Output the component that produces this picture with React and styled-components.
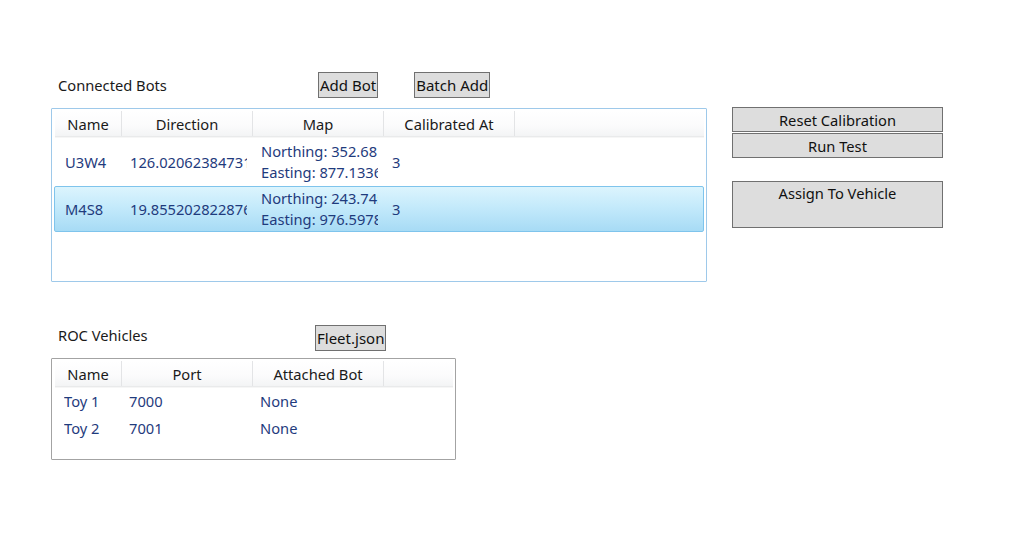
import React from 'react'
import styled, { createGlobalStyle } from 'styled-components';

const GlobalStyle = createGlobalStyle`
  html, body { margin: 0; padding: 0; background: #ffffff; }
  body { font-family: "Noto Sans", "Open Sans", sans-serif; font-size: 14.7px; color: #1a1a1a; }
`;

const bots = [
      { name: 'U3W4', direction: '126.020623847311', north: '352.6812', east: '877.13364', cal: '3' },
      { name: 'M4S8', direction: '19.8552028228761', north: '243.7451', east: '976.59784', cal: '3', selected: true },
];

const vehicles = [
      { name: 'Toy 1', port: '7000', bot: 'None' },
      { name: 'Toy 2', port: '7001', bot: 'None' },
];

const botCols = [67, 131, 131, 131];
const vehicleCols = [67, 131, 131];

export default function App() {
      return (
            <Page>
                  <GlobalStyle />
                  <TopSection>
                        <LeftColumn>
                              <TitleRow>
                                    <SectionLabel $width={267}>Connected Bots</SectionLabel>
                                    <SmallButton>Add Bot</SmallButton>
                                    <SmallButton $gap={36}>Batch Add</SmallButton>
                              </TitleRow>
                              <ListBox $width={656} $height={174} $focused>
                                    <HeaderRow>
                                          {['Name', 'Direction', 'Map', 'Calibrated At'].map((h, i) => (
                                                <HeaderCell key={h} $width={botCols[i]}>{h}</HeaderCell>
                                          ))}
                                          <HeaderFiller />
                                    </HeaderRow>
                                    {bots.map(b => (
                                          <BotRow key={b.name} $selected={b.selected}>
                                                <Cell $width={botCols[0]} $pad={10}><Clip>{b.name}</Clip></Cell>
                                                <Cell $width={botCols[1]}><Clip>{b.direction}</Clip></Cell>
                                                <Cell $width={botCols[2]}>
                                                      <MapLines>
                                                            <span>Northing: {b.north}</span>
                                                            <span>Easting: {b.east}</span>
                                                      </MapLines>
                                                </Cell>
                                                <Cell $width={botCols[3]}><Clip>{b.cal}</Clip></Cell>
                                          </BotRow>
                                    ))}
                              </ListBox>
                        </LeftColumn>
                        <ActionColumn>
                              <WideButton>Reset Calibration</WideButton>
                              <WideButton>Run Test</WideButton>
                              <TallButton>Assign To Vehicle</TallButton>
                        </ActionColumn>
                  </TopSection>

                  <BottomSection>
                        <TitleRow>
                              <SectionLabel $width={264} $lift={3}>ROC Vehicles</SectionLabel>
                              <SmallButton>Fleet.json</SmallButton>
                        </TitleRow>
                        <ListBox $width={405} $height={102}>
                              <HeaderRow>
                                    {['Name', 'Port', 'Attached Bot'].map((h, i) => (
                                          <HeaderCell key={h} $width={vehicleCols[i]}>{h}</HeaderCell>
                                    ))}
                                    <HeaderFiller $short />
                              </HeaderRow>
                              {vehicles.map(v => (
                                    <VehicleRow key={v.name}>
                                          <Cell $width={vehicleCols[0]} $pad={10}><Clip>{v.name}</Clip></Cell>
                                          <Cell $width={vehicleCols[1]}><Clip>{v.port}</Clip></Cell>
                                          <Cell $width={vehicleCols[2]}><Clip>{v.bot}</Clip></Cell>
                                    </VehicleRow>
                              ))}
                        </ListBox>
                  </BottomSection>
            </Page>
      );
}

const Page = styled.div`
  width: 1024px;
  height: 541px;
  box-sizing: border-box;
  padding: 72px 0 0 51px;
  overflow: hidden;
`;

const TopSection = styled.div`
  display: flex;
  flex-direction: row;
  align-items: flex-start;
`;

const LeftColumn = styled.div`
  display: flex;
  flex-direction: column;
`;

const TitleRow = styled.div`
  display: flex;
  flex-direction: row;
  align-items: center;
  height: 26px;
`;

const SectionLabel = styled.div`
  width: ${p => p.$width}px;
  box-sizing: border-box;
  padding-left: 7px;
  margin-bottom: ${p => (p.$lift || 0) * 2}px;
  color: #1a1a1a;
`;

const SmallButton = styled.div`
  height: 26px;
  box-sizing: border-box;
  margin-left: ${p => p.$gap || 0}px;
  padding: 0 1px;
  display: flex;
  align-items: center;
  background: #dddddd;
  border: 1px solid #707070;
  font-size: 15px;
  color: #111;
`;

const ListBox = styled.div`
  margin-top: ${p => (p.$focused ? 10 : 7)}px;
  width: ${p => p.$width}px;
  height: ${p => p.$height}px;
  box-sizing: border-box;
  border: 1px solid ${p => (p.$focused ? '#9ec9ea' : '#a3a3a3')};
  border-radius: 1px;
  padding: 2px 2px 0 2px;
  background: #fff;
  overflow: hidden;
`;

const HeaderRow = styled.div`
  display: flex;
  flex-direction: row;
  height: 25px;
  margin-left: 1px;
  background: linear-gradient(#ffffff 0%, #fbfbfc 60%, #f3f4f5 100%);
  border-bottom: 1px solid #e9eaeb;
  box-shadow: 0 1px 0 #f6f6f6;
`;

const HeaderCell = styled.div`
  width: ${p => p.$width}px;
  flex: none;
  box-sizing: border-box;
  border-right: 1px solid #e3e4e6;
  display: flex;
  align-items: center;
  justify-content: center;
  color: #1a1a1a;
`;

const HeaderFiller = styled.div`
  flex: 1;
  margin-right: ${p => (p.$short ? 0 : 2)}px;
`;

const BotRow = styled.div`
  display: flex;
  flex-direction: row;
  align-items: center;
  height: 46px;
  margin-top: 2px;
  box-sizing: border-box;
  border: 1px solid ${p => (p.$selected ? '#7fc4ec' : 'transparent')};
  border-radius: 2px;
  background: ${p => (p.$selected ? 'linear-gradient(#dcf4fd 0%, #c4eafb 45%, #a7dbf5 100%)' : 'transparent')};
  & + & { margin-top: 1px; }
`;

const VehicleRow = styled.div`
  display: flex;
  flex-direction: row;
  align-items: center;
  height: 27px;
  &:first-of-type { margin-top: 2px; }
`;

const Cell = styled.div`
  width: ${p => p.$width}px;
  flex: none;
  box-sizing: border-box;
  padding-left: ${p => p.$pad || 8}px;
  padding-right: 6px;
  color: #1f3b7d;
`;

const Clip = styled.div`
  overflow: hidden;
  white-space: nowrap;
`;

const MapLines = styled.div`
  display: flex;
  flex-direction: column;
  line-height: 21px;
  overflow: hidden;
  white-space: nowrap;
`;

const ActionColumn = styled.div`
  display: flex;
  flex-direction: column;
  width: 211px;
  margin-left: 25px;
  margin-top: 35px;
`;

const WideButton = styled.div`
  height: 25px;
  box-sizing: border-box;
  background: #dddddd;
  border: 1px solid #707070;
  display: flex;
  align-items: center;
  justify-content: center;
  color: #111;
  & + & { margin-top: 1px; }
`;

const TallButton = styled.div`
  height: 47px;
  margin-top: 23px;
  box-sizing: border-box;
  background: #dddddd;
  border: 1px solid #707070;
  padding-top: 1px;
  text-align: center;
  color: #111;
`;

const BottomSection = styled.div`
  display: flex;
  flex-direction: column;
  margin-top: 43px;
`;
